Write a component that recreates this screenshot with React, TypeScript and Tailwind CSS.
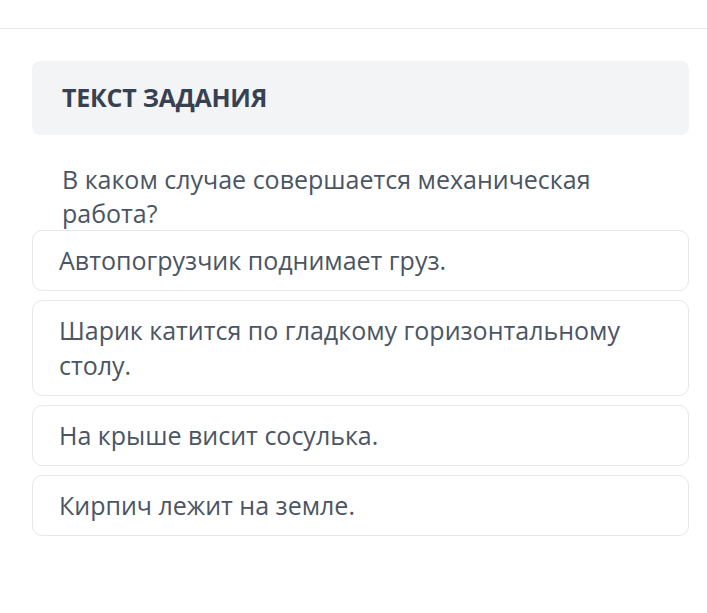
const options = [
  "Автопогрузчик поднимает груз.",
  "Шарик катится по гладкому горизонтальному столу.",
  "На крыше висит сосулька.",
  "Кирпич лежит на земле.",
];

export default function App() {
  return (
    <div className="min-h-screen w-full bg-white font-['Open_Sans',sans-serif]">
      <div className="h-[29px] border-b border-[#e5e7eb]" />

      <div className="pl-8 pr-[18px] pt-8">
        {/* Task header */}
        <div className="flex h-[74px] items-center rounded-lg bg-[#f3f4f6] px-[30px]">
          <h2 className="text-[25px] font-bold uppercase tracking-[-0.01em] text-[#374151]">
            Текст задания
          </h2>
        </div>

        {/* Question */}
        <p className="mt-[27px] pl-[30px] pr-[60px] text-[25px] leading-[34px] text-[#4b5563]">
          В каком случае совершается механическая работа?
        </p>

        {/* Answers */}
        <div className="flex flex-col gap-[9px]">
          {options.map((opt) => (
            <div
              key={opt}
              className="rounded-[10px] border border-[#e5e7eb] bg-white py-3 pl-[26px] pr-[40px] text-[25px] leading-[35px] text-[#4b5563]"
            >
              {opt}
            </div>
          ))}
        </div>
      </div>
    </div>
  );
}
